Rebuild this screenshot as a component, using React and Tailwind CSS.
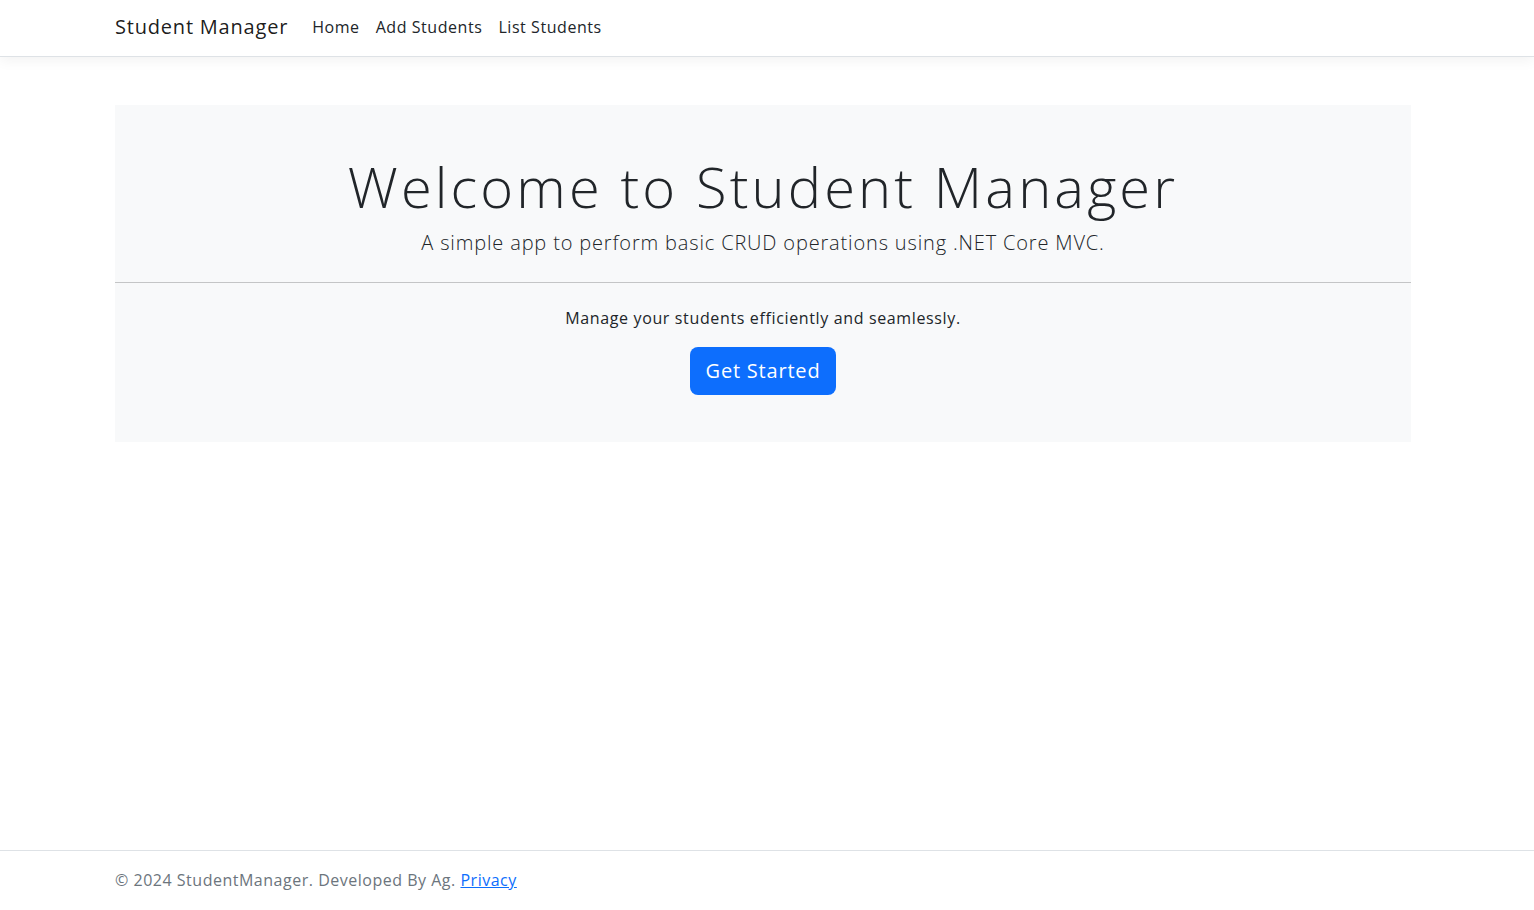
import React from "react";

const font = { fontFamily: '"Open Sans", "Liberation Sans", sans-serif' };

function Navbar() {
  return (
    <nav className="h-[57px] border-b border-[#dee2e6] bg-white shadow-[0_4px_12px_rgba(0,0,0,0.05)]">
      <div className="ml-[115px] flex h-[54px] w-[1296px] items-center">
        <a href="#" className="mr-4 text-[20px] tracking-[0.04em] text-[rgba(0,0,0,0.9)]">
          Student Manager
        </a>
        <ul className="flex items-center">
          {["Home", "Add Students", "List Students"].map((item) => (
            <li key={item}>
              <a href="#" className="px-2 text-[16px] tracking-[0.035em] text-[#212529]">
                {item}
              </a>
            </li>
          ))}
        </ul>
      </div>
    </nav>
  );
}

function Hero() {
  return (
    <div className="ml-[115px] mt-[48px] w-[1296px] bg-[#f8f9fa] pb-[47px] pt-[48px] text-center text-[#212529]">
      <h1 className="mb-2 text-[56px] font-light leading-[67px] tracking-[0.056em]">
        Welcome to Student Manager
      </h1>
      <p className="text-[20px] font-light leading-[30px] tracking-[0.042em]">
        A simple app to perform basic CRUD operations using .NET Core MVC.
      </p>
      <hr className="mt-6 border-0 border-t border-[#c4c5c6]" />
      <p className="mt-[23px] text-[16px] leading-[24px] tracking-[0.04em]">
        Manage your students efficiently and seamlessly.
      </p>
      <a
        href="#"
        className="mt-[17px] inline-block rounded-lg bg-[#0d6efd] px-4 py-2 text-[20px] leading-[32px] tracking-[0.04em] text-white"
      >
        Get Started
      </a>
    </div>
  );
}

function Footer() {
  return (
    <footer className="mt-auto h-[60px] border-t border-[#dee2e6] bg-white">
      <div className="ml-[115px] w-[1296px] whitespace-nowrap text-[16px] leading-[59px] tracking-[0.032em] text-[#6c757d]">
        © 2024 StudentManager. Developed By Ag.{" "}
        <a href="#" className="text-[#0d6efd] underline">
          Privacy
        </a>
      </div>
    </footer>
  );
}

export default function App() {
  return (
    <div className="flex min-h-screen flex-col bg-white" style={font}>
      <Navbar />
      <Hero />
      <Footer />
    </div>
  );
}
